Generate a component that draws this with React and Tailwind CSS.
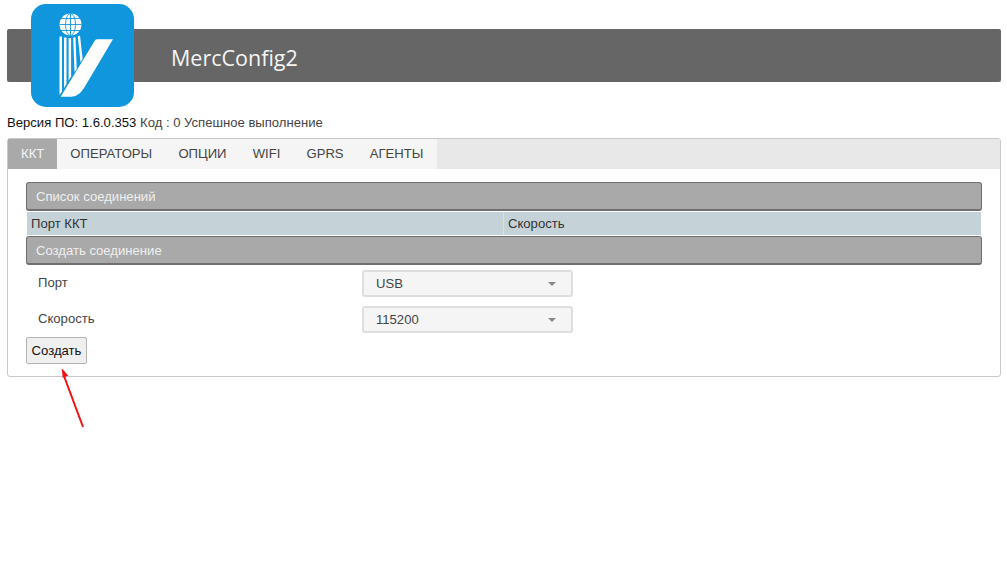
const tabs = ["ОПЕРАТОРЫ", "ОПЦИИ", "WIFI", "GPRS", "АГЕНТЫ"];

function Logo() {
  return (
    <svg viewBox="0 0 103 103" className="absolute left-[31px] top-[4px] h-[103px] w-[103px]">
      <rect width="103" height="103" rx="15" fill="#0f96dd" />
      <circle cx="39.5" cy="20.5" r="11" fill="#fff" />
      <g stroke="#0f96dd" strokeWidth="0.9" fill="none">
        <ellipse cx="39.5" cy="20.5" rx="5" ry="11" />
        <path d="M39.5 9.5v22M28.5 20.5h22M30 14.5h19M30 26.5h19" />
      </g>
      <g fill="#fff">
        <path d="M28.500 32.500h2.500v55l-2.500 3.500z" />
        <path d="M33 33.500h2.500v46.500l-2.500 4z" />
        <path d="M37.600 34h2.500v38.500l-2.500 4z" />
        <path d="M42.200 33.600l2.300-.4 1.200 31.500-2.200 3.600z" />
        <path d="M46.800 32.600l2.200-1 2.600 23.400-2.100 3.400z" />
        <path d="M66 35.300H82L53 84C49 90 45 92.700 40 92.700H29.700L63 38C64 36 65 35.300 66 35.300z" />
      </g>
    </svg>
  );
}

function Bar({ children }) {
  return (
    <div className="flex h-[29px] items-center rounded-[3px] border border-b-2 border-[#6f6f6f] bg-[#a9a9a9] pl-[9px] pt-[2px] text-[#efefef]">
      {children}
    </div>
  );
}

function Field({ label, value }) {
  return (
    <div className="flex h-[36px] items-center pt-[1px] pl-[12px]">
      <div className="w-[324px] -translate-y-[1px]">{label}</div>
      <div className="flex h-[27px] w-[211px] items-center justify-between rounded-[3px] border-2 border-[#dedede] bg-[#f5f5f5] pl-[12px] pr-[15px] text-[#444]">
        {value}
        <span className="h-0 w-0 border-x-[4px] border-t-[4px] border-x-transparent border-t-[#888]" />
      </div>
    </div>
  );
}

export default function App() {
  return (
    <div className="relative min-h-[566px] bg-white px-[7px] pb-[8px] pr-[6px] pt-[29px] font-['Liberation_Sans',Arial,sans-serif] text-[13.1px] leading-[18px] text-[#444]">
      <Logo />
      <header className="flex h-[53px] items-center rounded-[2px] bg-[#666] pl-[164px] pt-[4px] text-[21.5px] text-[#f5f5f5] font-['Open_Sans',sans-serif]">
        MercConfig2
      </header>

      <p className="mt-[32px]">
        <span className="text-[#111]">Версия ПО: 1.6.0.353</span> Код : 0 Успешное выполнение
      </p>

      <main className="mt-[6px] rounded-[3px] border border-[#c8c8c8] pb-[12px]">
        <nav className="flex h-[30px] bg-[#e8e8e8]">
          <div className="flex items-center bg-[#a9a9a9] px-[13px] text-[#f5f5f5]">ККТ</div>
          <div className="flex bg-[#f5f5f5]">
            {tabs.map((t) => (
              <div key={t} className="flex items-center px-[13.1px]">{t}</div>
            ))}
          </div>
        </nav>

        <section className="px-[18px] pt-[13px]">
          <Bar>Список соединений</Bar>
          <div className="mx-[1px] my-[1px] flex h-[23px] items-center bg-[#c5d2d7] text-[#333]">
            <div className="flex h-full w-[477px] items-center border-r border-[#d8e2e6] pl-[4px]">Порт ККТ</div>
            <div className="pl-[4px]">Скорость</div>
          </div>
          <Bar>Создать соединение</Bar>
          <Field label="Порт" value="USB" />
          <Field label="Скорость" value="115200" />
          <button className="block h-[27px] w-[61px] rounded-[2px] border border-[#b4b4b4] bg-[#efefef] text-[#111]">
            Создать
          </button>
        </section>
      </main>

      <svg viewBox="0 0 40 70" className="absolute left-[52px] top-[362px] h-[70px] w-[40px]">
        <path d="M31 65L12 14" stroke="#f51010" strokeWidth="2" fill="none" />
        <path d="M9.700 6.300L16.300 13.700L10.700 15.700z" fill="#f51010" />
      </svg>
    </div>
  );
}
